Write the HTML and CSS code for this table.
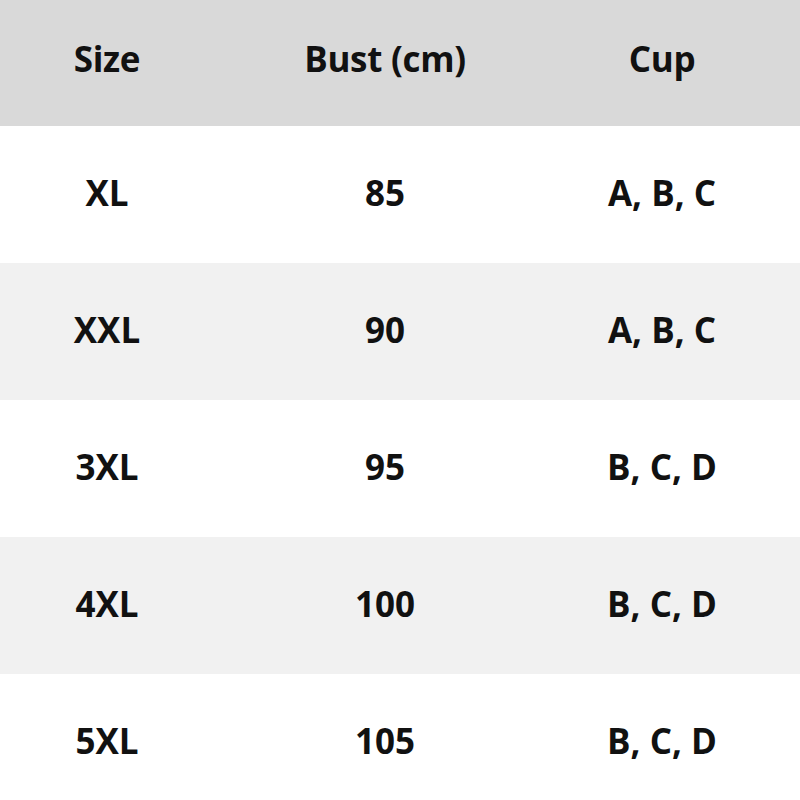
FILE: index.html
```html
<!DOCTYPE html>
<html>
<head>
<meta charset="utf-8">
<link rel="stylesheet" href="styles.css">
</head>
<body>
<div class="table">
  <div class="row head">
    <div class="cell">Size</div>
    <div class="cell">Bust (cm)</div>
    <div class="cell">Cup</div>
  </div>
  <div class="row">
    <div class="cell">XL</div>
    <div class="cell">85</div>
    <div class="cell">A, B, C</div>
  </div>
  <div class="row alt">
    <div class="cell">XXL</div>
    <div class="cell">90</div>
    <div class="cell">A, B, C</div>
  </div>
  <div class="row">
    <div class="cell">3XL</div>
    <div class="cell">95</div>
    <div class="cell">B, C, D</div>
  </div>
  <div class="row alt">
    <div class="cell">4XL</div>
    <div class="cell">100</div>
    <div class="cell">B, C, D</div>
  </div>
  <div class="row">
    <div class="cell">5XL</div>
    <div class="cell">105</div>
    <div class="cell">B, C, D</div>
  </div>
</div>
</body>
</html>
```
FILE: styles.css
```css
html, body {
  margin: 0;
  padding: 0;
  background: #ffffff;
}
.table {
  width: 800px;
  height: 800px;
  overflow: hidden;
  font-family: "Open Sans", "Noto Sans", sans-serif;
  font-weight: 700;
  color: #111111;
}
.row {
  display: grid;
  grid-template-columns: 214px 342px 212px;
  height: 137px;
  padding-bottom: 5px;
  box-sizing: border-box;
  align-items: center;
  background: #ffffff;
  font-size: 35px;
}
.row.alt {
  background: #f1f1f1;
}
.row.head {
  height: 126px;
  background: #d9d9d9;
  padding-bottom: 10px;
  font-size: 35px;
  letter-spacing: -0.3px;
}
.cell {
  text-align: center;
  line-height: 1;
}
```
